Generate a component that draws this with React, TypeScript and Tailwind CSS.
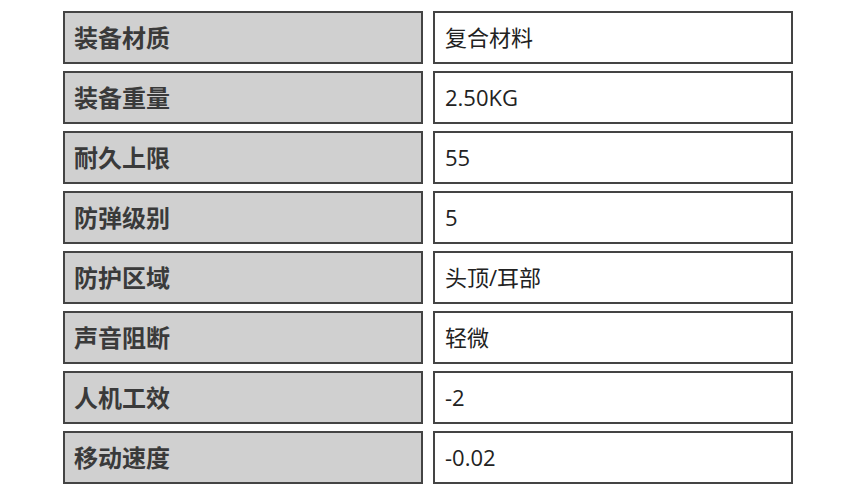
const rows: [string, string][] = [
  ["装备材质", "复合材料"],
  ["装备重量", "2.50KG"],
  ["耐久上限", "55"],
  ["防弹级别", "5"],
  ["防护区域", "头顶/耳部"],
  ["声音阻断", "轻微"],
  ["人机工效", "-2"],
  ["移动速度", "-0.02"],
];

export default function App() {
  return (
    <div className="bg-white w-[859px] h-[491px] pt-[11px] font-['Open_Sans','Noto_Sans_CJK_SC',sans-serif]">
      <div className="ml-[63px] w-[730px] flex flex-col gap-[7px]">
        {rows.map(([label, value]) => (
          <div key={label} className="flex gap-[10px]">
            <div className="w-[360px] h-[53px] border-2 border-[#444] bg-[#d0d0d0] flex items-center pl-[9px] text-[24px] font-bold text-[#3a3a3a]">
              {label}
            </div>
            <div className="w-[360px] h-[53px] border-2 border-[#444] bg-white flex items-center pl-[10px] text-[22px] text-[#222]">
              {value}
            </div>
          </div>
        ))}
      </div>
    </div>
  );
}
